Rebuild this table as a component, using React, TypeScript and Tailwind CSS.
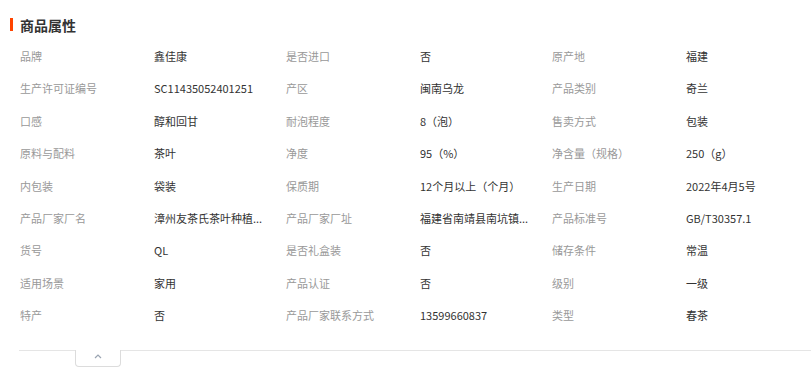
const rows: [string, string][][] = [
  [["品牌", "鑫佳康"], ["是否进口", "否"], ["原产地", "福建"]],
  [["生产许可证编号", "SC11435052401251"], ["产区", "闽南乌龙"], ["产品类别", "奇兰"]],
  [["口感", "醇和回甘"], ["耐泡程度", "8（泡）"], ["售卖方式", "包装"]],
  [["原料与配料", "茶叶"], ["净度", "95（%）"], ["净含量（规格）", "250（g）"]],
  [["内包装", "袋装"], ["保质期", "12个月以上（个月）"], ["生产日期", "2022年4月5号"]],
  [["产品厂家厂名", "漳州友茶氏茶叶种植..."], ["产品厂家厂址", "福建省南靖县南坑镇..."], ["产品标准号", "GB/T30357.1"]],
  [["货号", "QL"], ["是否礼盒装", "否"], ["储存条件", "常温"]],
  [["适用场景", "家用"], ["产品认证", "否"], ["级别", "一级"]],
  [["特产", "否"], ["产品厂家联系方式", "13599660837"], ["类型", "春茶"]],
];

export default function App() {
  return (
    <div
      className="w-[811px] h-[379px] bg-white overflow-hidden"
      style={{ fontFamily: '"Microsoft YaHei", "Noto Sans CJK SC", "Liberation Sans", sans-serif' }}
    >
      <div className="flex items-center pl-[10px] pt-[18px] h-[31px]">
        <span className="w-[3px] h-[13px] bg-[#ff4400]" />
        <h2 className="ml-[7px] text-[14px] leading-[14px] font-bold text-[#333]">商品属性</h2>
      </div>
      <div className="pl-[20px] mt-[9px]">
        {rows.map((row, i) => (
          <div key={i} className="flex h-[32.4px] items-center text-[11px]">
            {row.map(([label, value], j) => (
              <div key={j} className="flex">
                <div className="w-[134px] text-[#999] whitespace-nowrap">{label}</div>
                <div className="w-[132px] text-[#333] whitespace-nowrap">{value}</div>
              </div>
            ))}
          </div>
        ))}
      </div>
      <div className="ml-[19px] mt-[18px] border-t border-[#e5e5e5]">
        <div className="ml-[56px] -mt-px w-[46px] h-[17px] bg-white border border-t-0 border-[#dcdcdc] rounded-b-[4px] flex justify-center pt-[4px]">
          <svg width="8" height="5" viewBox="0 0 8 5" fill="none">
            <path d="M1 4 L4 1 L7 4" stroke="#9aa4b2" strokeWidth="1.2" />
          </svg>
        </div>
      </div>
    </div>
  );
}
